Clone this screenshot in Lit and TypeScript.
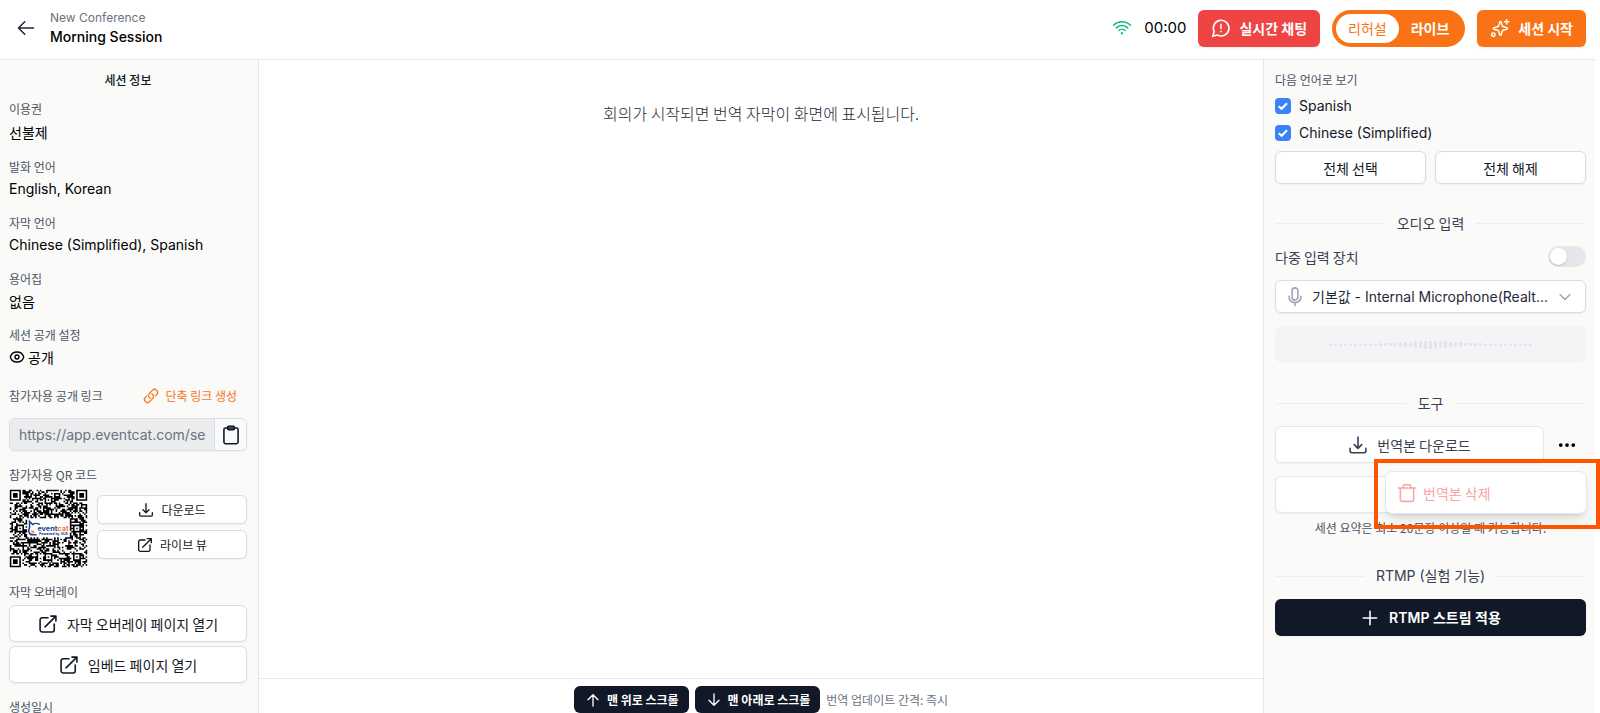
import { LitElement, html, css, svg, nothing } from "lit";
import { customElement, state } from "lit/decorators.js";
import { classMap } from "lit/directives/class-map.js";

const ICONS = {
  back: svg`<path d="M10.5 19.5 3 12m0 0 7.5-7.5M3 12h18"/>`,
  wifi: svg`<path d="M8.288 15.038a5.25 5.25 0 0 1 7.424 0M5.106 11.856c3.807-3.808 9.98-3.808 13.788 0M1.924 8.674c5.565-5.565 14.587-5.565 20.152 0M12.53 18.22l-.53.53-.53-.53a.75.75 0 0 1 1.06 0Z"/>`,
  chat: svg`<path d="M7.9 20.5A9.4 9.4 0 1 0 3.8 16.4L2 22Z"/><path d="M12 7.5v5M12 16v.5"/>`,
  sparkles: svg`<path d="M12.5 4.2c.5 0 .8.3.9.7l1 3.7c.3 1 1 1.700 2 2l3.700 1c.9.3.9 1.500 0 1.800l-3.700 1c-1 .3-1.700 1-2 2l-1 3.700c-.3.9-1.500.9-1.800 0l-1-3.700c-.3-1-1-1.700-2-2l-3.700-1c-.9-.3-.9-1.500 0-1.800l3.700-1c1-.3 1.700-1 2-2l1-3.700c.1-.4.5-.7.9-.7Z"/><path d="M20 2v5M17.500 4.500h5"/><circle cx="4" cy="20" r="2"/>`,
  eye: svg`<path d="M2.036 12.322a1.012 1.012 0 0 1 0-.639C3.423 7.510 7.360 4.500 12 4.500c4.638 0 8.573 3.007 9.963 7.178.07.207.07.431 0 .639C20.577 16.490 16.640 19.500 12 19.500c-4.638 0-8.573-3.007-9.963-7.178Z"/><circle cx="12" cy="12" r="3"/>`,
  link: svg`<path d="M13.190 8.688a4.500 4.500 0 0 1 1.242 7.244l-4.500 4.500a4.500 4.500 0 0 1-6.364-6.364l1.757-1.757m13.350-.622 1.757-1.757a4.500 4.500 0 0 0-6.364-6.364l-4.500 4.500a4.500 4.500 0 0 0 1.242 7.244"/>`,
  clipboard: svg`<rect x="3.500" y="3.500" width="17" height="19" rx="2"/><rect x="8" y="1.500" width="8" height="4" rx="1"/>`,
  download: svg`<path d="M2.500 16v3A2.250 2.250 0 0 0 4.750 21.250h14.500A2.250 2.250 0 0 0 21.500 19V16M16.500 11.500 12 16m0 0L7.500 11.500m4.500 4.500V2.500"/>`,
  external: svg`<path d="M12 4.500H5A2.500 2.500 0 0 0 2.500 7v12A2.500 2.500 0 0 0 5 21.500h12a2.500 2.500 0 0 0 2.500-2.500v-7M8.500 15.500 21.500 2.500M15.500 2.500h6v6"/>`,
  mic: svg`<path d="M12 18.750a7 6 0 0 0 7-6v-1.500m-7 7.500a7 6 0 0 1-7-6v-1.500m7 7.500v3.750M12 15.750a3.500 3.500 0 0 1-3.500-3.500V4.500a3.500 3.500 0 1 1 7 0v7.750a3.500 3.500 0 0 1-3.500 3.500Z"/>`,
  down: svg`<path d="m19.500 8.250-7.500 7.500-7.500-7.500"/>`,
  trash: svg`<path d="M1.500 6h21M20 6v14a2 2 0 0 1-2 2H6a2 2 0 0 1-2-2V6M7.500 6V4a2 2 0 0 1 2-2h5a2 2 0 0 1 2 2v2"/>`,
  plus: svg`<path d="M12 4v16M4 12h16"/>`,
  arrowUp: svg`<path d="M4.500 11.500 12 4m0 0 7.500 7.500M12 4v17"/>`,
  arrowDown: svg`<path d="M19.500 12.500 12 20m0 0-7.500-7.500M12 20V3"/>`,
  dots: svg`<circle cx="4.500" cy="12" r="1.300"/><circle cx="12" cy="12" r="1.300"/><circle cx="19.500" cy="12" r="1.300"/>`,
};

type IconName = keyof typeof ICONS;

const icon = (name: IconName, size: "sm" | "md" | "lg" = "md", extra = "") => html`
  <svg class="icon ${size} ${extra}" viewBox="0 0 24 24" aria-hidden="true">${ICONS[name]}</svg>
`;

const QR_SIZE = 49;

function qrPath(): string {
  let seed = 20717;
  const random = () => {
    seed = (seed * 1103515245 + 12345) % 2147483648;
    return seed / 2147483648;
  };
  const finder = (x: number, y: number) => {
    const ring = Math.max(Math.abs(x - 3), Math.abs(y - 3));
    return ring === 3 || ring <= 1;
  };
  const marks = [[24, 6], [6, 24], [42, 24], [24, 42], [42, 42]];
  let d = "";
  for (let y = 0; y < QR_SIZE; y++) {
    for (let x = 0; x < QR_SIZE; x++) {
      let dark = random() > 0.46;
      const fx = x < 8 ? x : x >= QR_SIZE - 8 ? x - (QR_SIZE - 7) : -9;
      const fy = y < 8 ? y : y >= QR_SIZE - 8 ? y - (QR_SIZE - 7) : -9;
      if (fx > -9 && fy > -9 && !(x > 40 && y > 40)) {
        dark = fx >= 0 && fx < 7 && fy >= 0 && fy < 7 && finder(fx, fy);
      }
      for (const [mx, my] of marks) {
        const ring = Math.max(Math.abs(x - mx), Math.abs(y - my));
        if (ring <= 2) dark = ring !== 1;
      }
      if (x > 10 && x < 38 && y > 17 && y < 30) dark = false;
      if (dark) d += `M${x} ${y}h1v1h-1z`;
    }
  }
  return d;
}

const QR_PATH = qrPath();

const LEVELS = [
  2, 2, 2, 2, 2, 2, 2, 2, 2, 2, 3, 3, 3, 3, 5, 5, 5, 7, 7, 8, 8, 8, 7, 7, 5, 5, 5, 3, 3, 3, 3, 2, 2, 2, 2, 2,
  2, 2, 2, 2, 2,
];

@customElement("app-root")
export class AppRoot extends LitElement {
  @state() private mode: "rehearsal" | "live" = "rehearsal";
  @state() private menuOpen = true;
  @state() private languages = [
    { id: "es", name: "Spanish", on: true },
    { id: "zh", name: "Chinese (Simplified)", on: true },
  ];

  static styles = css`
    :host {
      --ko: "Noto Sans CJK KR", "Inter", sans-serif;
      --en: "Inter", "Noto Sans CJK KR", sans-serif;
      --line: #e5e7eb;
      --edge: #d9dce3;
      --ink: #111827;
      --panel: #fafaf9;
      --orange: #f97316;
      display: flex;
      flex-direction: column;
      box-sizing: border-box;
      height: 100vh;
      padding-right: 5px;
      overflow: hidden;
      background: #fff;
      color: var(--ink);
      font: 400 14px/20px var(--ko);
    }
    * { box-sizing: border-box; }
    h1, h2, h3, p, dl, dd { margin: 0; font-weight: 400; }
    button, input, select { font: inherit; color: inherit; margin: 0; }
    button { padding: 0; cursor: pointer; }
    .en { font-family: var(--en); }

    .icon {
      flex: none;
      width: 20px;
      height: 20px;
      fill: none;
      stroke: currentColor;
      stroke-width: 1.9;
      stroke-linecap: round;
      stroke-linejoin: round;
    }
    .icon.sm { width: 16px; height: 16px; stroke-width: 2; }
    .icon.solid { fill: currentColor; }

    header {
      flex: none;
      display: flex;
      align-items: center;
      gap: 12px;
      height: 60px;
      padding: 0 9px 3px 16px;
      border-bottom: 1px solid var(--line);
    }
    .back { display: flex; border: 0; background: none; color: #1f2937; }
    .titles { flex: 1; margin-left: 2px; font-family: var(--en); }
    .conference { font-size: 12px; line-height: 18px; color: #6b7280; }
    .session { font-size: 14px; line-height: 20px; font-weight: 500; color: #000; }
    .wifi { color: #10b981; }
    .clock { font: 400 15px/20px var(--en); color: #000; }
    .solid-btn {
      display: flex;
      align-items: center;
      gap: 8px;
      height: 37px;
      padding: 0 13px;
      border: 0;
      border-radius: 6px;
      color: #fff;
      font-weight: 700;
      box-shadow: 0 1px 2px rgb(0 0 0 / 8%);
    }
    .red { background: #ef4444; }
    .orange { background: var(--orange); }
    .modes {
      display: flex;
      height: 37px;
      padding: 4px;
      border-radius: 19px;
      background: var(--orange);
    }
    .mode {
      padding: 0 12px;
      border: 0;
      border-radius: 15px;
      background: none;
      color: #fff;
      font-weight: 700;
    }
    .mode.current { background: #fff; color: var(--orange); font-weight: 400; }

    .body {
      flex: 1;
      min-height: 0;
      display: grid;
      grid-template-columns: 259px minmax(0, 1fr) 332px;
    }
    aside { background: var(--panel); overflow: hidden; }
    .info { padding: 10px 11px 0 9px; border-right: 1px solid var(--line); }
    .tools { padding: 10px 9px 0 11px; border-left: 1px solid var(--line); overflow: visible; }

    .info-title { font-size: 12px; font-weight: 500; text-align: center; }
    .facts { margin-top: 9px; }
    .fact { margin-bottom: 12px; }
    .label, .fact dt { font-size: 12px; line-height: 20px; color: #4b5563; }
    .fact dd { display: flex; align-items: center; gap: 3px; line-height: 24px; color: #000; }
    .fact:first-child dd { line-height: 26px; }
    .row { display: flex; align-items: center; justify-content: space-between; }
    .link-row { margin-top: 17px; }
    .short-link {
      display: flex;
      align-items: center;
      gap: 6px;
      margin-right: 10px;
      border: 0;
      background: none;
      color: var(--orange);
      font-size: 12px;
      line-height: 20px;
    }
    .url {
      display: flex;
      height: 33px;
      margin-top: 12px;
      border: 1px solid var(--edge);
      border-radius: 6px;
      overflow: hidden;
      box-shadow: 0 1px 2px rgb(0 0 0 / 5%);
    }
    .url input {
      flex: 1;
      min-width: 0;
      padding: 0 8px 0 9px;
      border: 0;
      background: #ebecee;
      color: #6b7280;
      font-family: var(--en);
      font-size: 14px;
      outline: none;
    }
    .copy {
      display: flex;
      align-items: center;
      justify-content: center;
      width: 32px;
      border: 0;
      border-left: 1px solid var(--edge);
      background: #f9fafb;
    }
    .qr-label { margin-top: 14px; }
    .qr-row { display: flex; align-items: center; gap: 9px; margin-top: 4px; }
    .qr { flex: none; width: 79px; height: 79px; background: #fff; }
    .stack { flex: 1; display: flex; flex-direction: column; gap: 6px; padding-bottom: 3px; }
    .btn {
      display: flex;
      align-items: center;
      justify-content: center;
      gap: 9px;
      width: 100%;
      height: 37px;
      border: 1px solid var(--edge);
      border-radius: 6px;
      background: #fff;
      box-shadow: 0 1px 2px rgb(0 0 0 / 5%);
    }
    .btn.small { height: 29px; font-size: 12px; gap: 7px; }
    .btn.medium { height: 33px; }
    .overlay-label { margin-top: 14px; }
    .pages { display: flex; flex-direction: column; gap: 4px; margin: 3px 0 14px; }

    main { display: flex; flex-direction: column; }
    .message {
      flex: 1;
      padding-top: 41px;
      text-align: center;
      font-size: 16px;
      line-height: 24px;
      font-weight: 300;
      color: #1f2937;
    }
    footer {
      display: flex;
      align-items: center;
      justify-content: center;
      gap: 6px;
      height: 35px;
      padding-top: 7px;
      border-top: 1px solid var(--line);
    }
    .dark { background: var(--ink); color: #fff; font-weight: 700; border: 0; border-radius: 6px; }
    .scroll { display: flex; align-items: center; gap: 6px; height: 27px; padding: 0 10px 0 11px; font-size: 12px; }
    .interval { font-size: 12px; color: #6b7280; }

    .check { display: flex; align-items: center; gap: 8px; height: 27px; font-family: var(--en); }
    .check input {
      appearance: none;
      width: 16px;
      height: 16px;
      border-radius: 4px;
      border: 1px solid var(--edge);
      background: #fff;
    }
    .check input:checked {
      border: 0;
      background: #3b82f6 url("data:image/svg+xml,%3Csvg xmlns='http://www.w3.org/2000/svg' viewBox='0 0 16 16'%3E%3Cpath d='m3.800 8.300 2.800 2.500 5.400-5.500' fill='none' stroke='white' stroke-width='2.200'/%3E%3C/svg%3E");
    }
    .checks { margin-top: 2px; }
    .pair { display: grid; grid-template-columns: 1fr 1fr; gap: 9px; margin-top: 5px; }
    .divider {
      display: flex;
      align-items: center;
      gap: 12px;
      color: #374151;
      font-size: 14px;
      line-height: 20px;
    }
    .divider::before, .divider::after { content: ""; flex: 1; height: 1px; background: #eceef1; }
    .audio { margin-top: 29px; }
    .multi { margin-top: 13px; height: 21px; color: #374151; }
    .switch {
      appearance: none;
      display: flex;
      width: 38px;
      height: 21px;
      padding: 2px;
      border-radius: 11px;
      background: var(--line);
    }
    .switch::before {
      content: "";
      width: 17px;
      height: 17px;
      border-radius: 50%;
      background: #fff;
      box-shadow: 0 1px 2px rgb(0 0 0 / 18%);
    }
    .switch:checked { justify-content: flex-end; background: var(--orange); }
    .device { display: grid; align-items: center; margin-top: 13px; color: #9ca3af; }
    .device > * { grid-area: 1 / 1; }
    .device select {
      appearance: none;
      width: 100%;
      height: 33px;
      padding: 0 36px 0 36px;
      border: 1px solid var(--edge);
      border-radius: 6px;
      background: #fff;
      color: #1f2937;
      font: 400 14px/20px var(--en);
      box-shadow: 0 1px 2px rgb(0 0 0 / 5%);
    }
    .device .icon { z-index: 1; pointer-events: none; margin: 0 10px; }
    .device .end { justify-self: end; margin: 0 13px; }
    .meter {
      display: flex;
      align-items: center;
      justify-content: center;
      gap: 2px;
      height: 37px;
      margin-top: 13px;
      border-radius: 7px;
      background: #f3f4f6;
    }
    .bar { width: 3px; border-radius: 1px; background: #e2e4e8; }
    .tool-title { margin-top: 30px; }
    .download-row { position: relative; display: flex; margin-top: 13px; }
    .download-row .btn { flex: 1; color: #374151; border-color: var(--line); }
    .more {
      display: flex;
      align-items: center;
      justify-content: center;
      width: 42px;
      padding-left: 4px;
      border: 0;
      background: none;
      color: #000;
    }
    .callout {
      position: absolute;
      z-index: 2;
      top: 33px;
      left: 99px;
      right: -14px;
      height: 70px;
      padding: 8px 9px 12px 7px;
      border: 4px solid #ff5500;
    }
    .menu {
      height: 43px;
      border: 1px solid var(--line);
      border-radius: 7px;
      background: #fff;
      box-shadow: 0 8px 12px -3px rgb(0 0 0 / 12%), 0 3px 5px -3px rgb(0 0 0 / 10%);
    }
    .menu button {
      display: flex;
      align-items: center;
      gap: 6px;
      width: 100%;
      height: 100%;
      padding: 0 11px;
      border: 0;
      background: none;
      color: #f8a5a5;
    }
    .summary { margin-top: 13px; border-color: var(--line); }
    .note { margin-top: 5px; text-align: center; font-size: 12px; color: #4b5563; }
    .rtmp-title { margin-top: 28px; font-family: var(--en); }
    .rtmp { margin-top: 13px; border: 0; background: var(--ink); color: #fff; font-family: var(--en); font-weight: 600; }
  `;

  private toggleLanguage(id: string) {
    this.languages = this.languages.map((l) => (l.id === id ? { ...l, on: !l.on } : l));
  }

  private setAll(on: boolean) {
    this.languages = this.languages.map((l) => ({ ...l, on }));
  }

  private renderMode(value: "rehearsal" | "live", text: string) {
    return html`<button
      class=${classMap({ mode: true, current: this.mode === value })}
      aria-pressed=${this.mode === value}
      @click=${() => (this.mode = value)}
    >${text}</button>`;
  }

  private renderHeader() {
    return html`
      <header>
        <button class="back" aria-label="Back">${icon("back")}</button>
        <div class="titles">
          <p class="conference">New Conference</p>
          <h1 class="session">Morning Session</h1>
        </div>
        <span class="wifi row">${icon("wifi")}</span>
        <span class="clock">00:00</span>
        <button class="solid-btn red">${icon("chat")}실시간 채팅</button>
        <div class="modes">${this.renderMode("rehearsal", "리허설")}${this.renderMode("live", "라이브")}</div>
        <button class="solid-btn orange">${icon("sparkles")}세션 시작</button>
      </header>
    `;
  }

  private renderInfo() {
    return html`
      <aside class="info">
        <h2 class="info-title">세션 정보</h2>
        <dl class="facts">
          <div class="fact"><dt>이용권</dt><dd>선불제</dd></div>
          <div class="fact"><dt>발화 언어</dt><dd class="en">English, Korean</dd></div>
          <div class="fact"><dt>자막 언어</dt><dd class="en">Chinese (Simplified), Spanish</dd></div>
          <div class="fact"><dt>용어집</dt><dd>없음</dd></div>
          <div class="fact"><dt>세션 공개 설정</dt><dd>${icon("eye", "sm")}공개</dd></div>
        </dl>
        <div class="row link-row">
          <label class="label" for="url">참가자용 공개 링크</label>
          <button class="short-link">${icon("link", "sm")}단축 링크 생성</button>
        </div>
        <div class="url">
          <input id="url" readonly value="https://app.eventcat.com/session" />
          <button class="copy" aria-label="Copy">${icon("clipboard")}</button>
        </div>
        <p class="label qr-label">참가자용 QR 코드</p>
        <div class="qr-row">
          <svg class="qr" viewBox="-0.5 -0.5 50 50" role="img" aria-label="QR">
            <path d=${QR_PATH} fill="#000" />
            <path
              d="M19 22c-1.500-1-3.500-.8-4.500 0l-2-2v4c-1 2-.5 4 1.500 4.500h3"
              fill="none" stroke="#1e4694" stroke-width="1"
            />
            <path d="M13.500 26l2 .5M13.500 27.500l2-.5" stroke="#f47b3c" stroke-width=".8" />
            <text x="17.500" y="26" font-family="Inter" font-weight="700" font-size="4.600" fill="#1e4694">event<tspan fill="#f47b3c">cat</tspan></text>
            <text x="18.500" y="28.700" font-family="Inter" font-weight="700" font-size="2.300" fill="#1e4694">Powered by XLB</text>
          </svg>
          <div class="stack">
            <button class="btn small">${icon("download", "sm")}다운로드</button>
            <button class="btn small">${icon("external", "sm")}라이브 뷰</button>
          </div>
        </div>
        <p class="label overlay-label">자막 오버레이</p>
        <div class="pages">
          <button class="btn">${icon("external")}자막 오버레이 페이지 열기</button>
          <button class="btn">${icon("external")}임베드 페이지 열기</button>
        </div>
        <p class="label">생성일시</p>
      </aside>
    `;
  }

  private renderTools() {
    return html`
      <aside class="tools">
        <p class="label">다음 언어로 보기</p>
        <div class="checks">
          ${this.languages.map(
            (l) => html`<label class="check">
              <input type="checkbox" .checked=${l.on} @change=${() => this.toggleLanguage(l.id)} />${l.name}
            </label>`,
          )}
        </div>
        <div class="pair">
          <button class="btn medium" @click=${() => this.setAll(true)}>전체 선택</button>
          <button class="btn medium" @click=${() => this.setAll(false)}>전체 해제</button>
        </div>

        <h3 class="divider audio">오디오 입력</h3>
        <div class="row multi">
          <label for="multi">다중 입력 장치</label>
          <input id="multi" class="switch" type="checkbox" role="switch" />
        </div>
        <div class="device">
          <select aria-label="오디오 입력">
            <option>기본값 - Internal Microphone(Realt...</option>
          </select>
          ${icon("mic")}${icon("down", "sm", "end")}
        </div>
        <div class="meter">
          ${LEVELS.map((h) => html`<span class="bar" style="height:${h}px"></span>`)}
        </div>

        <h3 class="divider tool-title">도구</h3>
        <div class="download-row">
          <button class="btn">${icon("download")}번역본 다운로드</button>
          <button class="more" aria-label="More" @click=${() => (this.menuOpen = !this.menuOpen)}>
            ${icon("dots", "md", "solid")}
          </button>
          ${this.menuOpen
            ? html`<div class="callout">
                <div class="menu"><button>${icon("trash")}번역본 삭제</button></div>
              </div>`
            : nothing}
        </div>
        <button class="btn summary" aria-label="Summary"></button>
        <p class="note">세션 요약은 최소 20문장 이상일 때 가능합니다.</p>

        <h3 class="divider rtmp-title">RTMP (실험 기능)</h3>
        <button class="btn rtmp">${icon("plus")}RTMP 스트림 적용</button>
      </aside>
    `;
  }

  render() {
    return html`
      ${this.renderHeader()}
      <div class="body">
        ${this.renderInfo()}
        <main>
          <p class="message">회의가 시작되면 번역 자막이 화면에 표시됩니다.</p>
          <footer>
            <button class="dark scroll">${icon("arrowUp", "sm")}맨 위로 스크롤</button>
            <button class="dark scroll">${icon("arrowDown", "sm")}맨 아래로 스크롤</button>
            <span class="interval">번역 업데이트 간격: 즉시</span>
          </footer>
        </main>
        ${this.renderTools()}
      </div>
    `;
  }
}
